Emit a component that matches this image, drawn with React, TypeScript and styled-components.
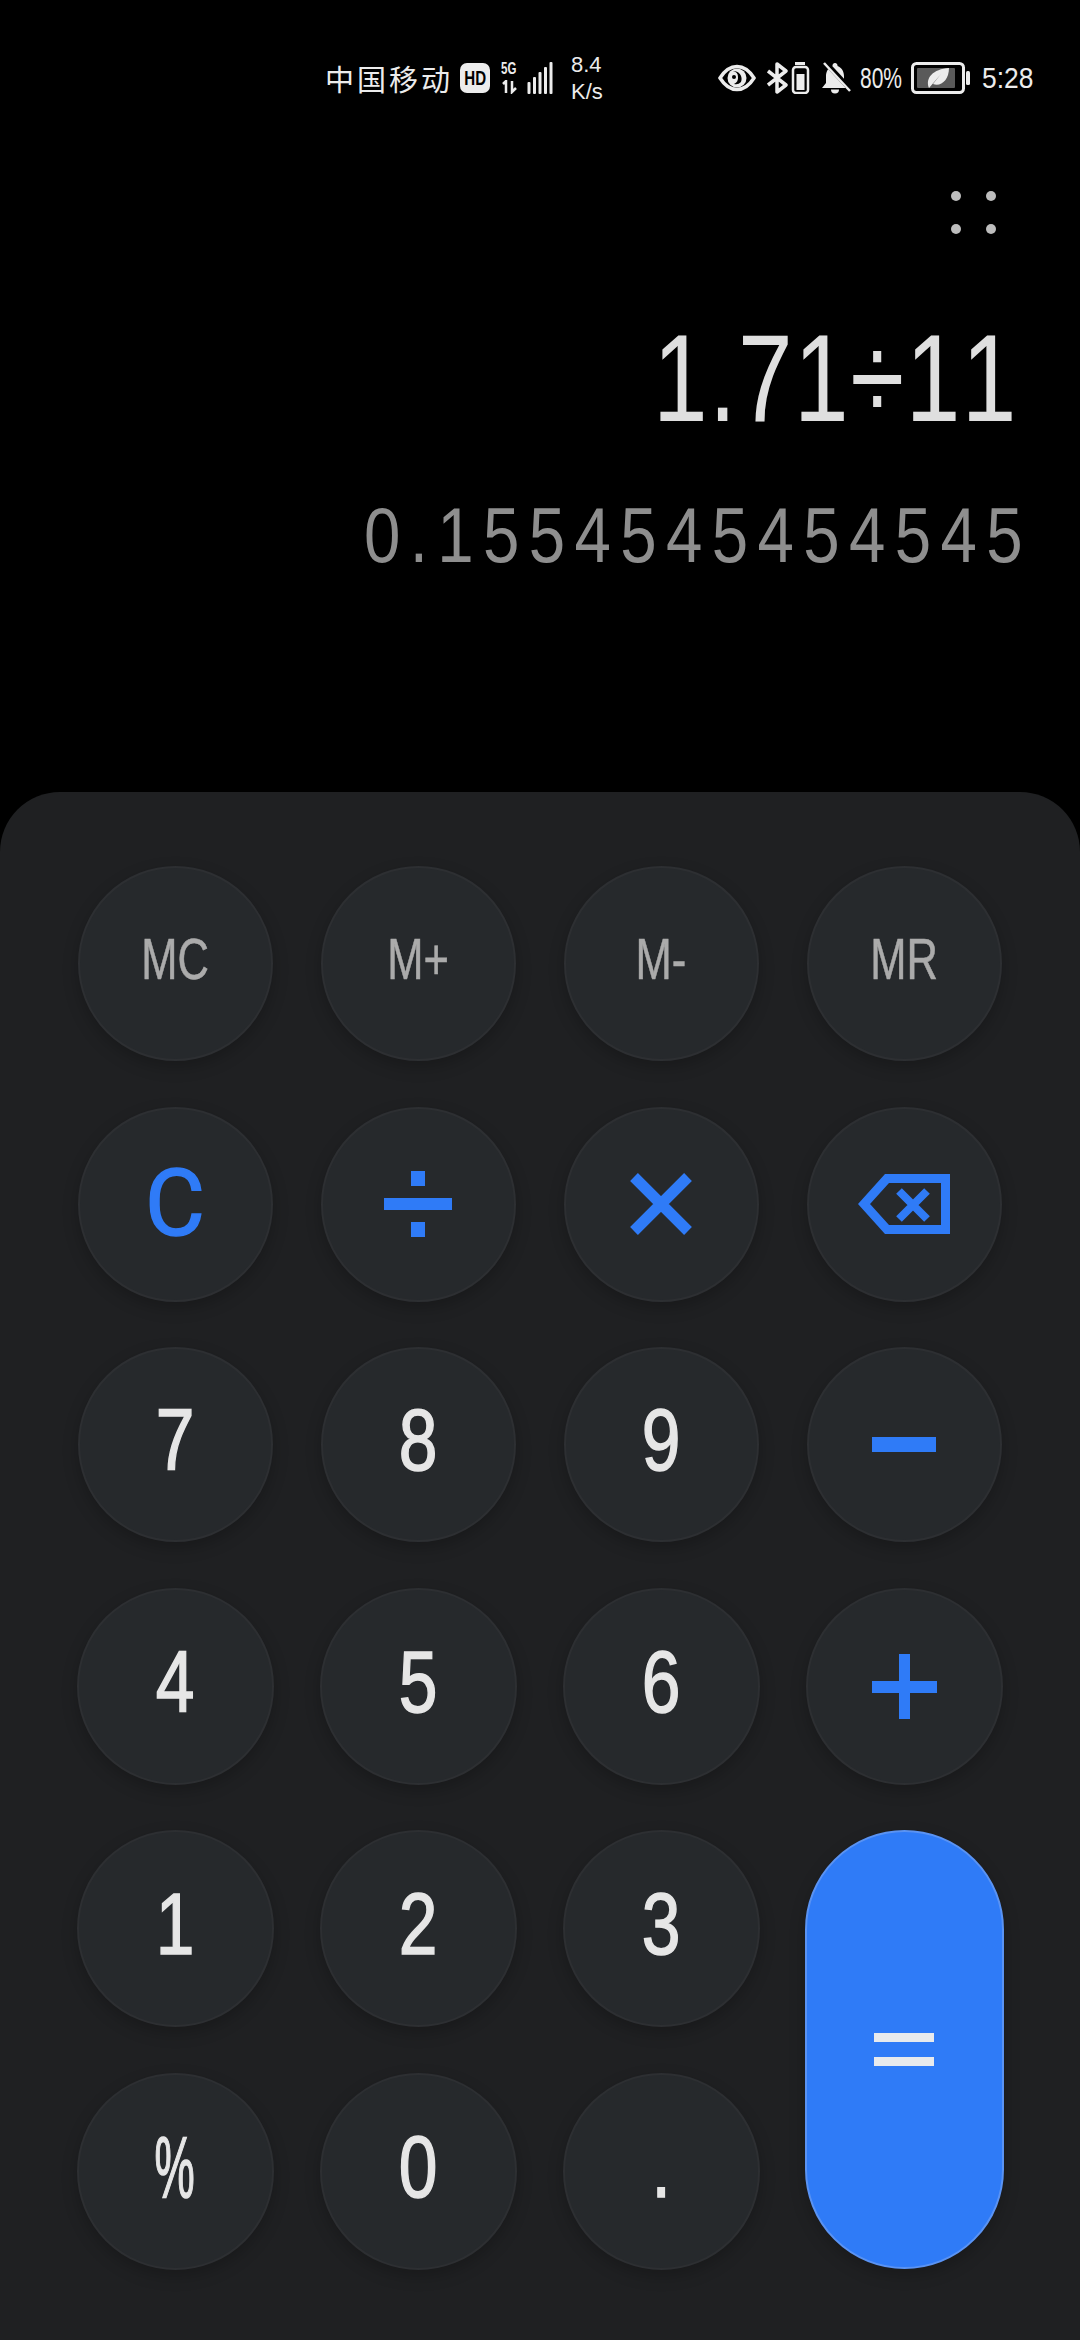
import styled, { createGlobalStyle } from 'styled-components';

const sans = `"Liberation Sans", Arial, sans-serif`;
const blue = '#2f7bf7';

const GlobalStyle = createGlobalStyle`
  html, body {
    margin: 0;
    padding: 0;
    background: #000;
  }
  * {
    box-sizing: border-box;
  }
`;

const Page = styled.div`
  width: 1080px;
  height: 2340px;
  background: #000;
  display: flex;
  flex-direction: column;
  overflow: hidden;
  font-family: ${sans};
  font-kerning: none;
`;

const Display = styled.div`
  height: 792px;
  flex-shrink: 0;
  display: flex;
  flex-direction: column;
  align-items: flex-end;
`;

const StatusBar = styled.div`
  align-self: stretch;
  height: 48px;
  margin-top: 54px;
  padding: 0 44px 0 325px;
  display: flex;
  align-items: center;
  justify-content: space-between;
  color: #ececec;
`;

const StatusGroup = styled.div`
  display: flex;
  align-items: center;
`;

const Carrier = styled.span`
  font-family: "Noto Sans CJK SC", sans-serif;
  font-weight: 400;
  font-size: 29px;
  line-height: 32px;
  letter-spacing: 3px;
  margin-right: 7px;
  white-space: nowrap;
`;

const HdBadge = styled.span`
  width: 30px;
  height: 30px;
  border-radius: 7px;
  background: #ececec;
  color: #000;
  display: flex;
  align-items: center;
  justify-content: center;
  margin-right: 11px;
`;

const HdLabel = styled.span`
  font-weight: 700;
  font-size: 21px;
  transform: scaleX(0.72);
`;

const NetworkStack = styled.div`
  width: 18px;
  height: 32px;
  display: flex;
  flex-direction: column;
  justify-content: space-between;
  margin-right: 8px;
`;

const NetworkLabel = styled.span`
  font-weight: 700;
  font-size: 16px;
  line-height: 14px;
  display: block;
  transform: scaleX(0.72);
  transform-origin: left center;
`;

const Speed = styled.div`
  margin-left: 18px;
  width: 34px;
  display: flex;
  flex-direction: column;
  font-size: 22px;
  line-height: 27px;
  white-space: nowrap;
`;

const StatusText = styled.span<{ $width: number; $squeeze: number }>`
  display: block;
  width: ${props => props.$width}px;
  font-size: 30px;
  line-height: 32px;
  white-space: nowrap;
  transform: scaleX(${props => props.$squeeze});
  transform-origin: left center;
`;

const Percent = styled(StatusText)`
  margin: 0 9px;
`;

const Clock = styled(StatusText)`
  margin-left: 11px;
`;

const IconSlot = styled.svg<{ $gap?: number }>`
  display: block;
  flex-shrink: 0;
  margin-right: ${props => props.$gap ?? 0}px;
`;

const MenuDots = styled.div`
  margin: 89px 84px 0 0;
  display: grid;
  grid-template-columns: 10px 10px;
  column-gap: 25px;
  row-gap: 23px;
`;

const Dot = styled.span`
  width: 10px;
  height: 10px;
  border-radius: 50%;
  background: #bdbdbd;
`;

const Expression = styled.div`
  margin: 81px 62px 0 0;
  font-size: 125px;
  line-height: 125px;
  letter-spacing: 2px;
  color: #dfdfdf;
  white-space: nowrap;
  transform: scaleX(0.785);
  transform-origin: right center;
`;

const Result = styled.div`
  margin: 57px 48px 0 0;
  font-size: 77px;
  line-height: 77px;
  letter-spacing: 11px;
  color: #8e8e8e;
  white-space: nowrap;
  transform: scaleX(0.85);
  transform-origin: right center;
`;

const Panel = styled.div`
  flex: 1;
  background: #1f2022;
  border-radius: 60px 60px 0 0;
  padding: 74px 0 0 76.5px;
  display: grid;
  grid-template-columns: repeat(4, 197px);
  grid-template-rows: 195px 195px 195px 197px 197px 197px;
  column-gap: 46px;
  row-gap: 45.5px;
  align-content: start;
`;

const Key = styled.button<{ $size: number; $tone: 'memory' | 'digit' | 'action' }>`
  width: ${props => props.$size}px;
  height: ${props => props.$size}px;
  justify-self: center;
  align-self: center;
  padding: 0 0 ${props => (props.$tone === 'action' ? 0 : 10)}px;
  border-radius: 50%;
  border: 2px solid #2d2f32;
  background: #26292c;
  box-shadow: 0 6px 16px rgba(0, 0, 0, 0.22);
  display: flex;
  align-items: center;
  justify-content: center;
  font-family: ${sans};
  font-size: ${props => (props.$tone === 'memory' ? 58 : 87)}px;
  line-height: 1;
  color: ${props => (props.$tone === 'memory' ? '#ababab' : '#e6e6e6')};
  -webkit-text-stroke: ${props => (props.$tone === 'digit' ? 1.5 : 0.6)}px currentColor;
`;

const Glyph = styled.span<{ $squeeze?: number }>`
  display: block;
  transform: scaleX(${props => props.$squeeze ?? 0.8});
`;

const ClearKey = styled(Key)`
  font-family: Roboto, sans-serif;
  font-weight: 400;
  font-size: 92px;
  color: ${blue};
  -webkit-text-stroke: 1.5px currentColor;
`;

const EqualsKey = styled.button`
  grid-row: span 2;
  width: 199px;
  height: 439px;
  justify-self: center;
  padding: 0;
  border-radius: 100px;
  border: 2px solid #5a93f3;
  background: ${blue};
  box-shadow: 0 6px 16px rgba(0, 0, 0, 0.22);
  display: flex;
  align-items: center;
  justify-content: center;
`;

const EyeIcon = () => (
  <IconSlot width="38" height="28" viewBox="0 0 38 28" $gap={11}>
    <path d="M2 14C7 6 12 2.500 19 2.500S31 6 36 14C31 22 26 25.500 19 25.500S7 22 2 14Z" fill="none" stroke="#ececec" strokeWidth="3.500" />
    <circle cx="19" cy="14" r="9.500" fill="#ececec" />
    <path d="M15 7a8 8 0 0 1 8 11a7 7 0 0 1-7 2a7 7 0 0 0 4-7a6 6 0 0 0-5-6Z" fill="#000" />
    <circle cx="16" cy="13" r="2" fill="#000" />
  </IconSlot>
);

const BluetoothBatteryIcon = () => (
  <IconSlot width="43" height="32" viewBox="0 0 43 32" $gap={11}>
    <path d="M1 9L19 23L10 30V2L19 9L1 23" fill="none" stroke="#ececec" strokeWidth="3.500" strokeLinejoin="round" />
    <rect x="28" y="0" width="10" height="3" fill="#ececec" />
    <rect x="26" y="5" width="15" height="26" rx="3" fill="none" stroke="#ececec" strokeWidth="2.500" />
    <rect x="29.500" y="12" width="8" height="16" fill="#ececec" />
  </IconSlot>
);

const BellOffIcon = () => (
  <IconSlot width="30" height="32" viewBox="0 0 30 32">
    <path d="M14 1a2.500 2.500 0 0 1 2.500 3C21 5.500 23 10 23 14V21L28 26H1L5 21V14C5 10 7 5.500 11.500 4A2.500 2.500 0 0 1 14 1Z" fill="#ececec" />
    <path d="M10 27.500h8a4 4 0 0 1-8 0Z" fill="#ececec" />
    <path d="M5 1L30 28" stroke="#000" strokeWidth="5" />
    <path d="M3 1L29 29" stroke="#ececec" strokeWidth="2.500" />
  </IconSlot>
);

const LeafBatteryIcon = () => (
  <IconSlot width="60" height="32" viewBox="0 0 60 32">
    <rect x="1.500" y="1.500" width="51" height="29" rx="4" fill="none" stroke="#ececec" strokeWidth="3" />
    <rect x="6" y="6" width="38" height="20" rx="1" fill="#5a5a5a" />
    <path d="M18 26C14 16 22 7 38 6C38 18 30 25 22 22L30 12L18 26Z" fill="#ececec" />
    <rect x="55" y="9" width="4" height="14" rx="1.500" fill="#ececec" />
  </IconSlot>
);

const SignalArrows = () => (
  <IconSlot width="18" height="14" viewBox="0 0 18 14">
    <path d="M2 4L5 1V13" fill="none" stroke="#ececec" strokeWidth="2.500" />
    <path d="M11 1V12L15 8" fill="none" stroke="#ececec" strokeWidth="2.500" />
  </IconSlot>
);

const SignalBars = () => (
  <IconSlot width="26" height="32" viewBox="0 0 26 32">
    {[20, 15, 10, 5, 0].map((top, i) => (
      <rect key={top} x={i * 5.500 + 0.500} y={top} width="3" height={32 - top} rx="1" fill="#ececec" />
    ))}
  </IconSlot>
);

const DivideIcon = () => (
  <svg width="68" height="66" viewBox="0 0 68 66">
    <rect x="27" y="0" width="14" height="15" fill={blue} />
    <rect x="0" y="27" width="68" height="12" fill={blue} />
    <rect x="27" y="51" width="14" height="15" fill={blue} />
  </svg>
);

const TimesIcon = () => (
  <svg width="62" height="62" viewBox="0 0 62 62">
    <path d="M4 4L58 58M58 4L4 58" stroke={blue} strokeWidth="11" />
  </svg>
);

const BackspaceIcon = () => (
  <svg width="92" height="60" viewBox="0 0 92 60">
    <path d="M29 4.500H87.500V55.500H29L6 30Z" fill="none" stroke={blue} strokeWidth="9" />
    <path d="M41 17L69 45M69 17L41 45" stroke={blue} strokeWidth="8" />
  </svg>
);

const MinusIcon = () => (
  <svg width="64" height="15" viewBox="0 0 64 15">
    <rect width="64" height="15" fill={blue} />
  </svg>
);

const PlusIcon = () => (
  <svg width="65" height="65" viewBox="0 0 65 65">
    <rect x="27" y="0" width="11" height="65" fill={blue} />
    <rect x="0" y="27" width="65" height="12" fill={blue} />
  </svg>
);

const EqualsIcon = () => (
  <svg width="60" height="33" viewBox="0 0 60 33">
    <rect y="0" width="60" height="9" fill="#e8eaed" />
    <rect y="24" width="60" height="9" fill="#e8eaed" />
  </svg>
);

const App = () => (
  <Page>
    <GlobalStyle />
    <Display>
      <StatusBar>
        <StatusGroup>
          <Carrier>中国移动</Carrier>
          <HdBadge>
            <HdLabel>HD</HdLabel>
          </HdBadge>
          <NetworkStack>
            <NetworkLabel>5G</NetworkLabel>
            <SignalArrows />
          </NetworkStack>
          <SignalBars />
          <Speed>
            <span>8.4</span>
            <span>K/s</span>
          </Speed>
        </StatusGroup>
        <StatusGroup>
          <EyeIcon />
          <BluetoothBatteryIcon />
          <BellOffIcon />
          <Percent $width={42} $squeeze={0.7}>80%</Percent>
          <LeafBatteryIcon />
          <Clock $width={54} $squeeze={0.88}>5:28</Clock>
        </StatusGroup>
      </StatusBar>
      <MenuDots>
        <Dot />
        <Dot />
        <Dot />
        <Dot />
      </MenuDots>
      <Expression>1.71÷11</Expression>
      <Result>0.1554545454545</Result>
    </Display>
    <Panel>
      <Key $size={195} $tone="memory"><Glyph $squeeze={0.75}>MC</Glyph></Key>
      <Key $size={195} $tone="memory"><Glyph $squeeze={0.75}>M+</Glyph></Key>
      <Key $size={195} $tone="memory"><Glyph $squeeze={0.75}>M-</Glyph></Key>
      <Key $size={195} $tone="memory"><Glyph $squeeze={0.75}>MR</Glyph></Key>
      <ClearKey $size={195} $tone="action">C</ClearKey>
      <Key $size={195} $tone="action" aria-label="divide"><DivideIcon /></Key>
      <Key $size={195} $tone="action" aria-label="multiply"><TimesIcon /></Key>
      <Key $size={195} $tone="action" aria-label="backspace"><BackspaceIcon /></Key>
      <Key $size={195} $tone="digit"><Glyph>7</Glyph></Key>
      <Key $size={195} $tone="digit"><Glyph>8</Glyph></Key>
      <Key $size={195} $tone="digit"><Glyph>9</Glyph></Key>
      <Key $size={195} $tone="action" aria-label="subtract"><MinusIcon /></Key>
      <Key $size={197} $tone="digit"><Glyph>4</Glyph></Key>
      <Key $size={197} $tone="digit"><Glyph>5</Glyph></Key>
      <Key $size={197} $tone="digit"><Glyph>6</Glyph></Key>
      <Key $size={197} $tone="action" aria-label="add"><PlusIcon /></Key>
      <Key $size={197} $tone="digit"><Glyph>1</Glyph></Key>
      <Key $size={197} $tone="digit"><Glyph>2</Glyph></Key>
      <Key $size={197} $tone="digit"><Glyph>3</Glyph></Key>
      <EqualsKey aria-label="equals"><EqualsIcon /></EqualsKey>
      <Key $size={197} $tone="digit"><Glyph $squeeze={0.52}>%</Glyph></Key>
      <Key $size={197} $tone="digit"><Glyph>0</Glyph></Key>
      <Key $size={197} $tone="digit"><Glyph>.</Glyph></Key>
    </Panel>
  </Page>
);

export default App;
